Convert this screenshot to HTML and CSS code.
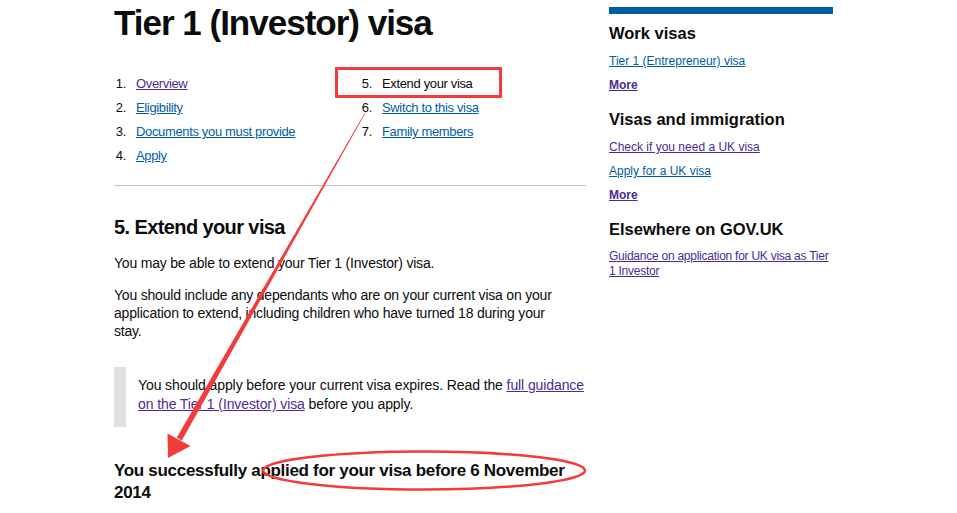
FILE: index.html
```html
<!DOCTYPE html>
<html lang="en">
    <head>
        <meta charset="UTF-8">
        <meta name="viewport" content="width=device-width, initial-scale=1.0">
        <title>Tier 1 (Investor) visa - GOV.UK</title>
        <link rel="stylesheet" href="styles.css">
    </head>
<body>
    <div class="page">
        <main class="content">
            <h1 class="title">Tier 1 (Investor) visa</h1>

            <!-- guide parts -->
            <div class="parts">
                <ol class="parts-list">
                    <li><span class="num">1.</span><a class="visited" href="#">Overview</a></li>
                    <li><span class="num">2.</span><a href="#">Eligibility</a></li>
                    <li><span class="num">3.</span><a href="#">Documents you must provide</a></li>
                    <li><span class="num">4.</span><a href="#">Apply</a></li>
                </ol>
                <ol class="parts-list">
                    <li><span class="num">5.</span><span class="current">Extend your visa</span></li>
                    <li><span class="num">6.</span><a href="#">Switch to this visa</a></li>
                    <li><span class="num">7.</span><a href="#">Family members</a></li>
                </ol>
            </div>

            <h2 class="part-title">5. Extend your visa</h2>
            <p class="first">You may be able to extend your Tier 1 (Investor) visa.</p>
            <p>You should include any dependants who are on your current visa on your application to extend, including children who have turned 18 during your stay.</p>

            <div class="inset">
                You should apply before your current visa expires. Read the <a class="visited" href="#">full guidance on the Tier 1 (Investor) visa</a> before you apply.
            </div>

            <h3 class="sub-title">You successfully applied for your visa before 6 November 2014</h3>
        </main>

        <aside class="related">
            <h2>Work visas</h2>
            <ul>
                <li><a href="#">Tier 1 (Entrepreneur) visa</a></li>
                <li><a class="more visited" href="#">More</a></li>
            </ul>
            <h2>Visas and immigration</h2>
            <ul>
                <li><a class="visited" href="#">Check if you need a UK visa</a></li>
                <li><a href="#">Apply for a UK visa</a></li>
                <li><a class="more visited" href="#">More</a></li>
            </ul>
            <h2>Elsewhere on GOV.UK</h2>
            <ul>
                <li class="long"><a class="visited" href="#">Guidance on application for UK visa as Tier 1 Investor</a></li>
            </ul>
        </aside>
    </div>

    <!-- red annotation marks drawn over the page -->
    <svg class="marks" width="957" height="513" viewBox="0 0 957 513">
        <rect x="336.5" y="68.5" width="164" height="28" fill="none" stroke="#f23b3b" stroke-width="3"/>
        <polygon points="365.6,112.8 364.4,113.4 176.8,437.6 181.8,440.4" fill="#f23b3b"/>
        <polygon points="168,458 167.5,433.5 190.5,446" fill="#f23b3b"/>
        <ellipse cx="424" cy="470.5" rx="161" ry="19" fill="none" stroke="#f23b3b" stroke-width="2.5"/>
    </svg>
</body>
</html>
```

FILE: styles.css
```css
body {
    font-family: "Liberation Sans", Arial, sans-serif;
    color: #0b0c0c;
    margin: 0;
    padding: 0;
    position: relative;
    min-height: 100vh;
    background: #fff;
}

a {
    color: #005ea5;
}

a.visited {
    color: #4c2c92;
}

.page {
    display: flex;
    gap: 23px;
    padding-left: 114px;
}

.content {
    width: 472px;
}

.title {
    font-size: 35px;
    line-height: 40px;
    letter-spacing: -1px;
    margin: 3px 0 0;
}

.parts {
    display: grid;
    grid-template-columns: 246px 1fr;
    margin-top: 29px;
    padding-bottom: 17px;
    border-bottom: 1px solid #bfc1c3;
}

.parts-list {
    list-style: none;
    margin: 0;
    padding: 0;
    font-size: 13px;
    line-height: 24px;
    letter-spacing: -0.35px;
}

.parts-list li {
    display: flex;
    gap: 10px;
}

.num {
    width: 12px;
    text-align: right;
}

.part-title {
    font-size: 20px;
    line-height: 24px;
    letter-spacing: -0.6px;
    margin: 29px 0 0;
}

p {
    max-width: 452px;
    font-size: 14px;
    line-height: 18px;
    letter-spacing: -0.2px;
    margin: 14px 0 0;
}

p.first {
    margin-top: 15px;
}

.inset {
    margin-top: 27px;
    border-left: 12px solid #dee0e2;
    padding: 9px 0 13px 12px;
    font-size: 14px;
    line-height: 19px;
    letter-spacing: -0.1px;
}

.sub-title {
    font-size: 17px;
    line-height: 22px;
    letter-spacing: -0.3px;
    margin: 33px 0 0;
}

.related {
    width: 224px;
    margin-top: 7px;
    border-top: 7px solid #005ea5;
}

.related h2 {
    font-size: 16.5px;
    line-height: 20px;
    margin: 16px 0 0;
}

.related h2:first-child {
    margin-top: 9px;
}

.related ul {
    list-style: none;
    margin: 10px 0 0;
    padding: 0;
    font-size: 12px;
    line-height: 16px;
}

.related li + li {
    margin-top: 8px;
}

.related li.long {
    line-height: 15px;
    letter-spacing: -0.25px;
}

.related .more {
    font-weight: bold;
}

.marks {
    position: absolute;
    top: 0;
    left: 0;
    pointer-events: none;
}
```
